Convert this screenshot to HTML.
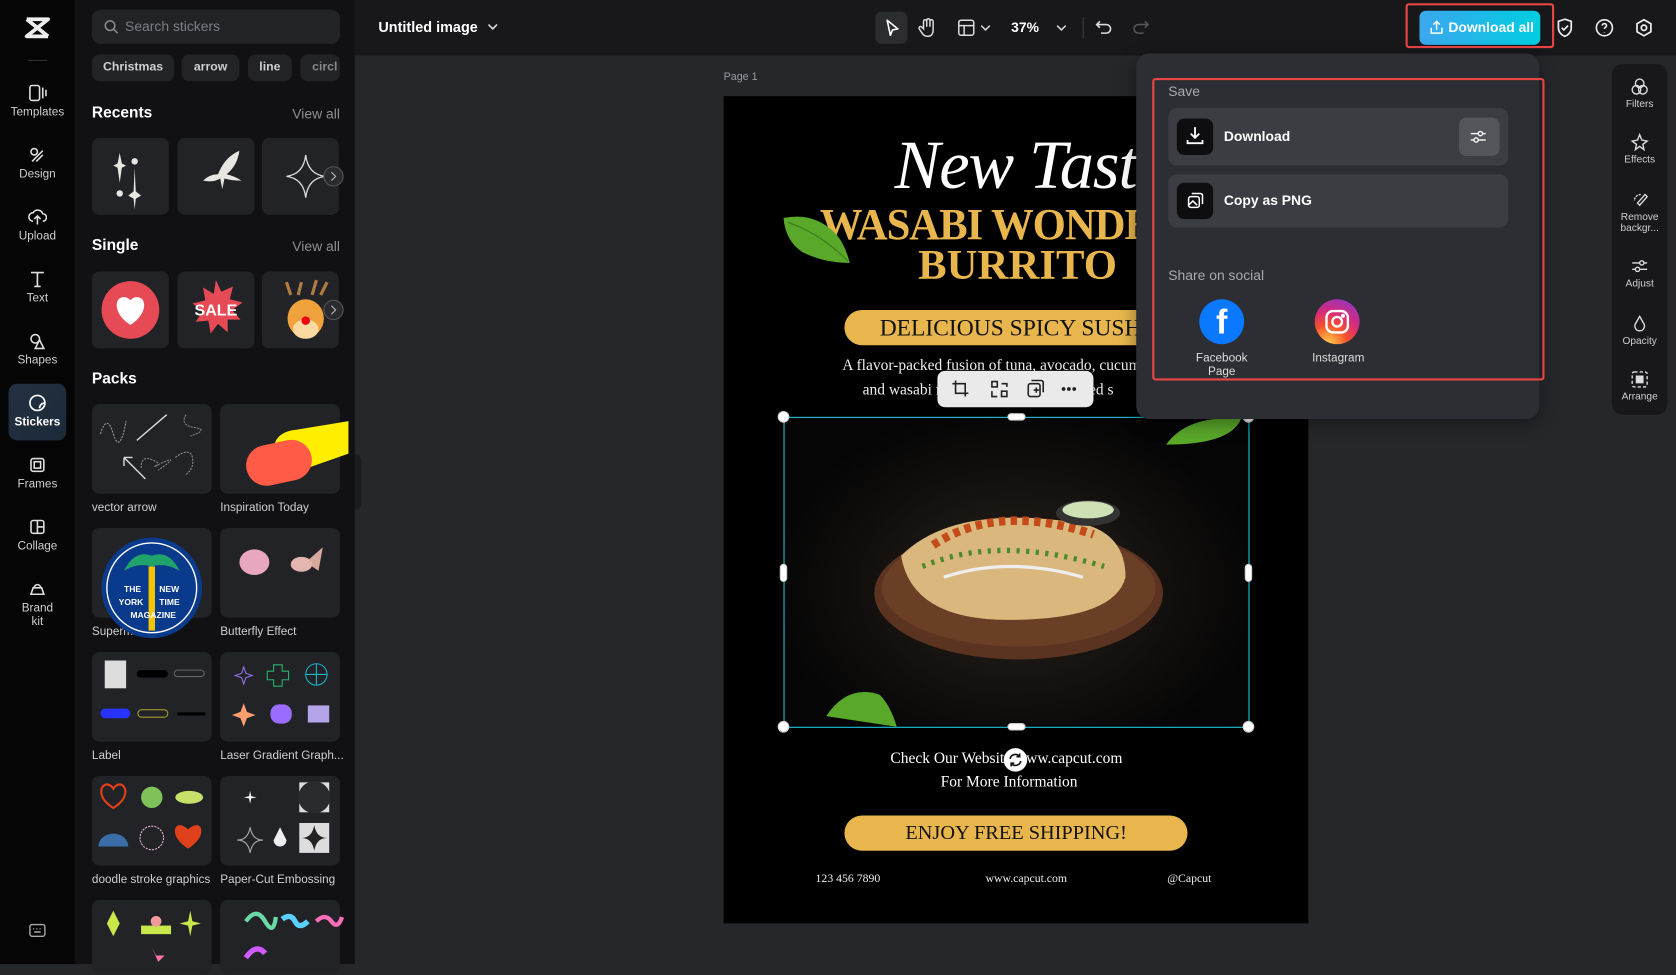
<!DOCTYPE html>
<html><head><meta charset="utf-8"><style>
*{box-sizing:border-box;margin:0;padding:0}
html,body{width:1676px;height:964px;overflow:hidden;background:#26272b;font-family:"Liberation Sans",sans-serif;color:#e6e6e6}
#w{position:absolute;left:0;top:0;width:1568px;height:902px;transform:scale(1.06888,1.0688);transform-origin:0 0;background:#26272b}
.a{position:absolute}
.rail{left:0;top:0;width:70px;height:902px;background:#050506}
.ri{position:absolute;left:0;width:70px;text-align:center;font-size:11px;color:#cfcfcf}
.ri svg{display:block;margin:0 auto 3px}
.panel{left:70px;top:0;width:262px;height:902px;background:#111114}
.chip{position:absolute;top:51px;height:25px;border-radius:7px;background:#222327;font-size:11.5px;color:#cfcfcf;font-weight:bold;line-height:25px;text-align:center}
.h{position:absolute;font-size:14.5px;font-weight:bold;color:#fff}
.va{position:absolute;right:14px;font-size:13px;color:#8d8e93}
.t{position:absolute;background:#222327;border-radius:7px}
.lb{position:absolute;font-size:11px;color:#cfcfcf}
.top{left:332px;top:0;width:1236px;height:52px;background:#18181b}
.poster{left:677px;top:90px;width:547px;height:774px;background:#000;overflow:hidden}
.serif{font-family:"Liberation Serif",serif}
.dd{left:1063px;top:50px;width:377px;height:342px;background:#2d2e33;border-radius:12px;box-shadow:0 4px 16px rgba(0,0,0,.4)}
.row{position:absolute;left:1093px;width:318px;background:#3c3d43;border-radius:8px}
.ib{position:absolute;left:8px;width:34px;height:34px;border-radius:7px;background:#0e0e10}
.rr{left:1508px;top:60px;width:52px;height:328px;background:#18181b;border-radius:10px}
.rt{position:absolute;left:0;width:52px;text-align:center;font-size:9.5px;color:#cfcfcf;line-height:10px}
.rt svg{display:block;margin:0 auto 3px}
</style></head><body><div id="w">

<div class="a rail">
  <svg class="a" style="left:22px;top:15px" width="26" height="22" viewBox="0 0 26 22"><path d="M3 3h20L3 19h20M3 3l20 16" stroke="#eee" stroke-width="3.5" fill="none" stroke-linejoin="round"/></svg>
  <div class="a" style="left:26px;top:56px;width:18px;height:1px;background:#333"></div>
  <div class="ri" style="top:78px"><svg width="18" height="18" viewBox="0 0 18 18" fill="none" stroke="#ddd" stroke-width="1.5"><rect x="2" y="2" width="9" height="14" rx="2"/><path d="M14 4v10M17 6v6"/></svg>Templates</div>
  <div class="ri" style="top:136px"><svg width="18" height="18" viewBox="0 0 18 18" fill="none" stroke="#ddd" stroke-width="1.5"><circle cx="6" cy="6" r="3"/><path d="M4 15l10-10M8 15l6-6"/></svg>Design</div>
  <div class="ri" style="top:194px"><svg width="18" height="18" viewBox="0 0 18 18" fill="none" stroke="#ddd" stroke-width="1.5"><path d="M5 13a4 4 0 010-8 5 5 0 019 1 3 3 0 010 7M9 16V9M6 11l3-3 3 3"/></svg>Upload</div>
  <div class="ri" style="top:252px"><svg width="18" height="18" viewBox="0 0 18 18" fill="none" stroke="#ddd" stroke-width="1.6"><path d="M3 3h12M9 3v13M6 16h6"/></svg>Text</div>
  <div class="ri" style="top:310px"><svg width="18" height="18" viewBox="0 0 18 18" fill="none" stroke="#ddd" stroke-width="1.5"><circle cx="7" cy="7" r="4"/><path d="M11 8l4 8H7z"/></svg>Shapes</div>
  <div class="a" style="left:8px;top:359px;width:54px;height:53px;border-radius:8px;background:linear-gradient(135deg,#243040,#1b2a3a)"></div>
  <div class="ri" style="top:368px;color:#fff;font-weight:bold"><svg width="18" height="18" viewBox="0 0 18 18" fill="none" stroke="#fff" stroke-width="1.6"><path d="M16 9a7 7 0 11-7-7h0a7 7 0 017 7zM16 9a5 5 0 00-5 5"/></svg>Stickers</div>
  <div class="ri" style="top:426px"><svg width="18" height="18" viewBox="0 0 18 18" fill="none" stroke="#ddd" stroke-width="1.5"><rect x="3" y="3" width="12" height="12" rx="2"/><rect x="6" y="6" width="6" height="6"/></svg>Frames</div>
  <div class="ri" style="top:484px"><svg width="18" height="18" viewBox="0 0 18 18" fill="none" stroke="#ddd" stroke-width="1.5"><rect x="3" y="3" width="12" height="12" rx="2"/><path d="M9 3v12M9 9h6"/></svg>Collage</div>
  <div class="ri" style="top:542px;line-height:13px"><svg width="18" height="18" viewBox="0 0 18 18" fill="none" stroke="#ddd" stroke-width="1.5"><path d="M3 14h12l-2-6H5zM6 8a3 3 0 016 0"/></svg>Brand<br>kit</div>
  <svg class="a" style="left:27px;top:864px" width="16" height="13" viewBox="0 0 16 13" fill="none" stroke="#aaa" stroke-width="1.3"><rect x="1" y="1" width="14" height="11" rx="2"/><path d="M4 5h1M7 5h1M10 5h1M5 8h6"/></svg>
</div>

<div class="a panel">
  <div class="a" style="left:16px;top:9px;width:232px;height:32px;border-radius:8px;background:#222327"></div>
  <svg class="a" style="left:27px;top:18px" width="14" height="14" viewBox="0 0 14 14" fill="none" stroke="#8b8c90" stroke-width="1.4"><circle cx="6" cy="6" r="4.5"/><path d="M9.5 9.5L13 13"/></svg>
  <div class="a" style="left:47px;top:17px;font-size:13px;color:#7d7e83">Search stickers</div>
  <div class="chip" style="left:16px;width:77px">Christmas</div>
  <div class="chip" style="left:100px;width:54px">arrow</div>
  <div class="chip" style="left:162px;width:41px">line</div>
  <div class="chip" style="left:211px;width:37px;text-align:left;padding-left:11px;color:#888;overflow:hidden">circl</div>
  <div class="h" style="left:16px;top:98px">Recents</div><div class="va" style="top:99px">View all</div>
  <div class="t" style="left:16px;top:129px;width:72px;height:72px"></div>
  <div class="t" style="left:96px;top:129px;width:72px;height:72px"></div>
  <div class="t" style="left:175px;top:129px;width:72px;height:72px"></div>
  <svg class="a" style="left:16px;top:129px" width="240" height="72" viewBox="0 0 240 72"><path d="M26 14l2 10 4 2-4 2-2 14-2-14-4-2 4-2z" fill="#e8e6e0"/><circle cx="26" cy="52" r="3" fill="#e8e6e0"/><circle cx="40" cy="22" r="3" fill="#e8e6e0"/><path d="M40 28l1 22 5 4-5 3-1 10-1-10-5-3 5-4z" fill="#e8e6e0"/><path d="M118 34q6-16 20-22-2 14-12 22 8 2 14 6-10 0-16-2l-2 10-2-10q-6 4-16 2 6-6 14-6" fill="#e8e6e0"/><path d="M200 16q2 18 18 20-16 2-18 20-2-18-18-20 16-2 18-20z" fill="none" stroke="#ddd" stroke-width="1.2"/><circle cx="226" cy="36" r="9" fill="#2a2b2f" stroke="#555"/><path d="M224 32l4 4-4 4" stroke="#bbb" fill="none"/></svg>
  <div class="h" style="left:16px;top:222px">Single</div><div class="va" style="top:223px">View all</div>
  <div class="t" style="left:16px;top:254px;width:72px;height:72px"></div>
  <div class="t" style="left:96px;top:254px;width:72px;height:72px"></div>
  <div class="t" style="left:175px;top:254px;width:72px;height:72px"></div>
  <svg class="a" style="left:16px;top:254px" width="240" height="72" viewBox="0 0 240 72"><circle cx="36" cy="36" r="27" fill="#e54a55"/><path d="M36 50C20 40 20 24 30 24c4 0 6 3 6 3s2-3 6-3c10 0 10 16-6 26z" fill="#fff"/><path d="M116 8l5 11 11-5-3 12 12 3-10 7 8 9-12 0 0 12-9-8-7 9-2-12-12 1 7-10-10-7 12-3-2-12 10 6z" fill="#e54a55"/><text x="116" y="41" font-size="15" font-weight="bold" fill="#fff" text-anchor="middle" font-family="Liberation Sans">SALE</text><path d="M182 10l4 12M196 10l-3 12M210 8l-4 14M220 10l-6 12" stroke="#b07a45" stroke-width="3"/><ellipse cx="200" cy="44" rx="17" ry="18" fill="#f0a23c"/><ellipse cx="200" cy="54" rx="12" ry="9" fill="#fcd9a0"/><circle cx="200" cy="46" r="4" fill="#e01"/><circle cx="226" cy="36" r="9" fill="#2a2b2f" stroke="#555"/><path d="M224 32l4 4-4 4" stroke="#bbb" fill="none"/></svg>
  <div class="h" style="left:16px;top:347px">Packs</div>
  <div class="t" style="left:16px;top:378px;width:112px;height:84px"></div>
  <div class="t" style="left:136px;top:378px;width:112px;height:84px"></div>
  <svg class="a" style="left:16px;top:378px" width="240" height="84" viewBox="0 0 240 84" fill="none"><path d="M8 28q6-20 12 0t12-12" stroke="#999" stroke-dasharray="2 1"/><path d="M70 10L42 34M30 50l20 20M30 50v8M30 50h8" stroke="#ddd" stroke-width="1.3"/><path d="M88 10q-6 10 8 12t-4 8" stroke="#888" stroke-dasharray="2 1"/><path d="M46 60q0-12 10-8t4 6 8-4-6 8" stroke="#888" stroke-dasharray="2 1"/><path d="M78 50q14-10 16 0t-6 16" stroke="#888" stroke-dasharray="2 1"/><path d="M170 44q0-18 22-20l60-10q16 0 12 24l-74 26z" fill="#ffee00"/><rect x="144" y="36" width="62" height="38" rx="19" transform="rotate(-12 175 55)" fill="#ff5b47"/></svg>
  <div class="lb" style="left:16px;top:469px">vector arrow</div><div class="lb" style="left:136px;top:469px">Inspiration Today</div>
  <div class="t" style="left:16px;top:494px;width:112px;height:84px"></div>
  <div class="t" style="left:136px;top:494px;width:112px;height:84px"></div>
  <div class="lb" style="left:16px;top:585px">Supermarket</div><div class="lb" style="left:136px;top:585px">Butterfly Effect</div>
  <svg class="a" style="left:16px;top:494px" width="240" height="110" viewBox="0 0 240 110"><circle cx="56" cy="56" r="47" fill="#0a3a8c"/><circle cx="56" cy="56" r="42" fill="none" stroke="#fff" stroke-width="1.3"/><path d="M30 40q10-20 26-14 16-6 26 14-14-8-26-4-12-4-26 4z" fill="#1fa36a"/><rect x="53" y="36" width="6" height="60" fill="#f5c400"/><g font-size="8" font-weight="bold" fill="#fff" font-family="Liberation Sans"><text x="30" y="60">THE</text><text x="63" y="60">NEW</text><text x="25" y="72">YORK</text><text x="63" y="72">TIME</text><text x="36" y="84">MAGAZINE</text></g><ellipse cx="152" cy="32" rx="14" ry="12" fill="#e9a6c0"/><path d="M200 32l16-14-4 22z" fill="#d9a89c"/><ellipse cx="196" cy="34" rx="10" ry="7" fill="#e5b5b0"/></svg>
  <div class="t" style="left:16px;top:610px;width:112px;height:84px"></div>
  <div class="t" style="left:136px;top:610px;width:112px;height:84px"></div>
  <svg class="a" style="left:16px;top:610px" width="240" height="84" viewBox="0 0 240 84" fill="none"><rect x="12" y="8" width="20" height="26" fill="#ddd"/><rect x="42" y="17" width="29" height="7" rx="3.5" fill="#000"/><rect x="77" y="17" width="28" height="6" rx="3" stroke="#666"/><rect x="8" y="53" width="28" height="9" rx="4.5" fill="#2933ff"/><rect x="43" y="54" width="28" height="7" rx="3.5" stroke="#a39a2a"/><path d="M80 58h26" stroke="#000" stroke-width="3"/><path d="M142 14l2 6 6 2-6 2-2 6-2-6-6-2 6-2z" stroke="#9a72e8"/><path d="M170 12h8v6h6v8h-6v6h-8v-6h-6v-8h6z" stroke="#2ab56a"/><circle cx="210" cy="21" r="10" stroke="#1bb7c8"/><path d="M200 21h20M210 11v20" stroke="#1bb7c8"/><path d="M142 48l3 8 8 3-8 3-3 8-3-8-8-3 8-3z" fill="#ff9d6c"/><rect x="167" y="49" width="20" height="18" rx="8" fill="#9a6cff"/><rect x="202" y="50" width="20" height="16" fill="#b4a5e8"/></svg>
  <div class="lb" style="left:16px;top:701px">Label</div><div class="lb" style="left:136px;top:701px">Laser Gradient Graph...</div>
  <div class="t" style="left:16px;top:726px;width:112px;height:84px"></div>
  <div class="t" style="left:136px;top:726px;width:112px;height:84px"></div>
  <svg class="a" style="left:16px;top:726px" width="240" height="84" viewBox="0 0 240 84" fill="none"><path d="M20 30C4 20 8 8 14 8c4 0 6 4 6 4s2-4 6-4c6 0 10 12-6 22z" stroke="#e0401a" stroke-width="2"/><circle cx="56" cy="20" r="10" fill="#7fc25a"/><ellipse cx="91" cy="20" rx="13" ry="6" fill="#c7e06a"/><path d="M6 66a14 12 0 0128 0z" fill="#3b6ea8"/><circle cx="56" cy="58" r="11" stroke="#e6b3d0" stroke-dasharray="2 1"/><path d="M90 68C74 58 76 46 82 46c4 0 8 4 8 4s4-4 8-4c6 0 8 12-8 22z" fill="#e0401a"/><path d="M148 14l1 5 5 1-5 1-1 5-1-5-5-1 5-1z" fill="#fff"/><rect x="194" y="6" width="28" height="28" fill="#ddd"/><circle cx="208" cy="20" r="15" fill="#2a2b2f"/><path d="M148 48q2 12 12 12-10 0-12 12-2-12-12-12 10 0 12-12z" stroke="#aaa"/><path d="M176 48l6 12a6 6 0 11-12 0z" fill="#eee"/><rect x="194" y="44" width="28" height="28" fill="#ddd"/><path d="M208 46q2 12 12 12-10 0-12 12-2-12-12-12 10 0 12-12z" fill="#222"/></svg>
  <div class="lb" style="left:16px;top:817px">doodle stroke graphics</div><div class="lb" style="left:136px;top:817px">Paper-Cut Embossing</div>
  <div class="t" style="left:16px;top:842px;width:112px;height:70px"></div>
  <div class="t" style="left:136px;top:842px;width:112px;height:70px"></div>
  <svg class="a" style="left:16px;top:842px" width="240" height="60" viewBox="0 0 240 60" fill="none"><path d="M20 10l6 12-6 12-6-12z" fill="#c8e84a"/><rect x="46" y="24" width="28" height="8" fill="#c8e84a"/><circle cx="60" cy="20" r="5" fill="#f19a9a"/><path d="M92 10l2 10 8 2-8 2-2 10-2-10-8-2 8-2z" fill="#c8e84a"/><path d="M56 44l4 8 8 0-6 6" fill="#f7a"/><path d="M144 20q10-14 18 0t10-4" stroke="#6bd9a6" stroke-width="4"/><path d="M178 18q8-6 12 2t12 0" stroke="#5ad0ff" stroke-width="5"/><path d="M210 20q8-8 14 0t10-4" stroke="#ff6fb8" stroke-width="4"/><path d="M144 54q10-14 18-4" stroke="#d05cff" stroke-width="5"/></svg>
</div>
<div class="a" style="left:332px;top:425px;width:6px;height:52px;background:#1b1c20;border-radius:0 6px 6px 0"></div>

<div class="a top">
  <div class="a" style="left:22px;top:18px;font-size:13.5px;font-weight:bold;color:#fff">Untitled image</div>
  <svg class="a" style="left:124px;top:21px" width="10" height="8" viewBox="0 0 10 8"><path d="M1 2l4 4 4-4" stroke="#ddd" stroke-width="1.5" fill="none"/></svg>
  <div class="a" style="left:487px;top:11px;width:30px;height:30px;border-radius:6px;background:#2c2d31"></div>
  <svg class="a" style="left:495px;top:17px" width="16" height="18" viewBox="0 0 16 18"><path d="M3 2l10 8-5 1-2 5z" stroke="#fff" stroke-width="1.5" fill="none" stroke-linejoin="round"/></svg>
  <svg class="a" style="left:527px;top:16px" width="18" height="20" viewBox="0 0 18 20" fill="none" stroke="#ddd" stroke-width="1.4"><path d="M5 11V4a1.5 1.5 0 013 0v5V3a1.5 1.5 0 013 0v6V4a1.5 1.5 0 013 0v8c0 4-2 6-5 6s-4-1-6-4l-2-3a1.5 1.5 0 012-2z"/></svg>
  <svg class="a" style="left:564px;top:18px" width="16" height="16" viewBox="0 0 16 16" fill="none" stroke="#ddd" stroke-width="1.4"><rect x="1" y="1" width="14" height="14" rx="2"/><path d="M1 6h14M6 6v9"/></svg>
  <svg class="a" style="left:585px;top:22px" width="10" height="8" viewBox="0 0 10 8"><path d="M1 2l4 4 4-4" stroke="#ddd" stroke-width="1.4" fill="none"/></svg>
  <div class="a" style="left:614px;top:18px;font-size:13px;font-weight:bold;color:#fff">37%</div>
  <svg class="a" style="left:656px;top:22px" width="10" height="8" viewBox="0 0 10 8"><path d="M1 2l4 4 4-4" stroke="#ddd" stroke-width="1.4" fill="none"/></svg>
  <div class="a" style="left:681px;top:16px;width:1px;height:20px;background:#3a3b40"></div>
  <svg class="a" style="left:693px;top:18px" width="16" height="16" viewBox="0 0 16 16" fill="none" stroke="#ddd" stroke-width="1.5"><path d="M4 2L1 5l3 3M1 5h9a4 4 0 010 8H5"/></svg>
  <svg class="a" style="left:727px;top:18px" width="16" height="16" viewBox="0 0 16 16" fill="none" stroke="#555" stroke-width="1.5"><path d="M12 2l3 3-3 3M15 5H6a4 4 0 000 8h5"/></svg>
  <div class="a" style="left:983px;top:3px;width:139px;height:42px;border:2.5px solid #e84545;border-radius:3px"></div>
  <div class="a" style="left:996px;top:10px;width:113px;height:32px;border-radius:6px;background:linear-gradient(90deg,#3ca7ee,#00cde0)"></div>
  <svg class="a" style="left:1005px;top:18px" width="14" height="15" viewBox="0 0 14 15" fill="none" stroke="#fff" stroke-width="1.4"><path d="M7 10V2M4 5l3-3 3 3M2 8v5h10V8"/></svg>
  <div class="a" style="left:1023px;top:18px;font-size:13px;font-weight:bold;color:#fff">Download all</div>
  <svg class="a" style="left:1123px;top:16px" width="18" height="20" viewBox="0 0 18 20" fill="none" stroke="#eee" stroke-width="1.6"><path d="M9 2l6 2v6c0 4-3 7-6 8-3-1-6-4-6-8V4z"/><path d="M6 10l2 2 4-4"/></svg>
  <svg class="a" style="left:1160px;top:17px" width="18" height="18" viewBox="0 0 18 18" fill="none" stroke="#eee" stroke-width="1.5"><circle cx="9" cy="9" r="7.5"/><path d="M7 7a2 2 0 114 0c0 1.5-2 1.5-2 3M9 13v.5"/></svg>
  <svg class="a" style="left:1197px;top:17px" width="18" height="18" viewBox="0 0 18 18" fill="none" stroke="#eee" stroke-width="1.6"><path d="M9 1.5l6.5 3.75v7.5L9 16.5 2.5 12.75v-7.5z"/><circle cx="9" cy="9" r="2.5"/></svg>
</div>

<div class="a" style="left:677px;top:67px;font-size:10px;color:#9a9ba0">Page 1</div>
<div class="a poster">
  <div class="a" style="left:160px;top:28px;font-family:'Liberation Serif',serif;font-style:italic;font-size:64px;color:#fff;white-space:nowrap;letter-spacing:-1px">New Taste</div>
  <div class="a serif" style="left:90px;top:96px;font-size:40px;font-weight:bold;color:#e8b64c;white-space:nowrap;letter-spacing:-1px;transform:scaleY(1.05)">WASABI WONDER</div>
  <div class="a serif" style="left:182px;top:134px;font-size:40px;font-weight:bold;color:#e8b64c;white-space:nowrap">BURRITO</div>
  <svg class="a" style="left:54px;top:108px" width="66" height="50" viewBox="0 0 66 50"><path d="M2 6q30-6 50 16 8 10 12 26Q40 48 20 38 4 28 2 6z" fill="#5aa82a"/><path d="M6 10q30 10 56 36" stroke="#3e7a1a" fill="none"/></svg>
  <div class="a" style="left:113px;top:200px;width:360px;height:33px;border-radius:17px;background:#e8b64c"></div>
  <div class="a serif" style="left:146px;top:204px;font-size:22px;color:#111;white-space:nowrap">DELICIOUS SPICY SUSHI</div>
  <div class="a serif" style="left:111px;top:244px;font-size:14.5px;color:#eee;white-space:nowrap">A flavor-packed fusion of tuna, avocado, cucumber,</div>
  <div class="a serif" style="left:130px;top:267px;font-size:14.5px;color:#eee;white-space:nowrap">and wasabi mayo, wrapped in seaweed s</div>
  <div class="a" style="left:56px;top:300px;width:436px;height:290px;background:radial-gradient(ellipse at 50% 55%,#2b231c 0%,#151210 40%,#050505 75%)"></div>
  <svg class="a" style="left:56px;top:300px" width="436" height="290" viewBox="0 0 436 290"><ellipse cx="220" cy="165" rx="135" ry="62" fill="#5a3420"/><ellipse cx="220" cy="160" rx="128" ry="55" fill="#6b3f25"/><path d="M110 130q50-50 170-30 40 10 40 50-10 40-110 40-90 0-100-60z" fill="#d9b77d"/><path d="M140 120q60-40 150-10" stroke="#c44a1a" stroke-width="8" fill="none" stroke-dasharray="6 5"/><path d="M130 140q70-30 170 0" stroke="#4d8a2b" stroke-width="5" fill="none" stroke-dasharray="3 6"/><path d="M150 150q60-20 130 0" stroke="#eee" stroke-width="3" fill="none"/><ellipse cx="285" cy="90" rx="30" ry="12" fill="#333"/><ellipse cx="285" cy="87" rx="24" ry="8" fill="#cfe0b5"/><path d="M40 280q20-30 50-20 10 10 16 30" fill="#5aa82a"/></svg>
  <svg class="a" style="left:410px;top:300px" width="80" height="30" viewBox="0 0 80 30"><path d="M4 26q20-28 70-24-10 24-70 24z" fill="#5aa82a"/></svg>
  <div class="a serif" style="left:156px;top:612px;font-size:14.5px;color:#fff;white-space:nowrap">Check Our Website www.capcut.com</div>
  <div class="a serif" style="left:203px;top:634px;font-size:14.5px;color:#fff;white-space:nowrap">For More Information</div>
  <div class="a" style="left:113px;top:673px;width:321px;height:33px;border-radius:17px;background:#e8b64c"></div>
  <div class="a serif" style="left:170px;top:679px;font-size:19px;color:#111;white-space:nowrap">ENJOY FREE SHIPPING!</div>
  <div class="a serif" style="left:86px;top:726px;font-size:11px;color:#eee">123 456 7890</div>
  <div class="a serif" style="left:245px;top:726px;font-size:11px;color:#eee">www.capcut.com</div>
  <div class="a serif" style="left:415px;top:726px;font-size:11px;color:#eee">@Capcut</div>
</div>
<div class="a" style="left:733px;top:390px;width:436px;height:291px;border:1.5px solid #1ec8e0"></div>
<svg class="a" style="left:726px;top:383px" width="450" height="305" viewBox="0 0 450 305"><g fill="#fff" stroke="#ccc"><circle cx="7" cy="7" r="5"/><circle cx="442" cy="7" r="5"/><circle cx="7" cy="297" r="5"/><circle cx="442" cy="297" r="5"/><rect x="217" y="4" width="16" height="6" rx="3"/><rect x="217" y="294" width="16" height="6" rx="3"/><rect x="4" y="145" width="6" height="16" rx="3"/><rect x="439" y="145" width="6" height="16" rx="3"/></g></svg>
<div class="a" style="left:939px;top:700px;width:22px;height:22px;border-radius:11px;background:#fff"></div>
<svg class="a" style="left:943px;top:704px" width="14" height="14" viewBox="0 0 14 14" fill="none" stroke="#111" stroke-width="1.5"><path d="M2 6a5 5 0 019-2M12 8a5 5 0 01-9 2M11 1v3H8M3 13v-3h3"/></svg>
<div class="a" style="left:877px;top:347px;width:146px;height:34px;border-radius:7px;background:#eaeaea;box-shadow:0 2px 6px rgba(0,0,0,.4)"></div>
<svg class="a" style="left:890px;top:355px" width="125" height="18" viewBox="0 0 125 18" fill="none" stroke="#222" stroke-width="1.5"><path d="M4 1v12h12M1 4h12v12"/><rect x="38" y="2" width="5" height="5"/><rect x="47" y="11" width="5" height="5"/><path d="M47 4h5v3M38 11v5h5"/><rect x="72" y="4" width="11" height="12" rx="2"/><path d="M75 1h9a2 2 0 012 2v9M77 10h5M79.5 7.5v5"/><circle cx="105" cy="9" r="1" fill="#222"/><circle cx="110" cy="9" r="1" fill="#222"/><circle cx="115" cy="9" r="1" fill="#222"/></svg>

<div class="a dd"></div>
<div class="a" style="left:1078px;top:73px;width:367px;height:283px;border:2.5px solid #e84545;border-radius:3px"></div>
<div class="a" style="left:1093px;top:78px;font-size:13px;color:#a9aaae">Save</div>
<div class="row" style="top:101px;height:54px"><div class="ib" style="top:10px"></div><div class="a" style="left:52px;top:19px;font-size:13px;font-weight:bold;color:#fff">Download</div><div class="a" style="left:272px;top:9px;width:38px;height:36px;border-radius:7px;background:#54555b"></div></div>
<svg class="a" style="left:1108px;top:117px" width="20" height="20" viewBox="0 0 20 20" fill="none" stroke="#fff" stroke-width="1.7"><path d="M10 2v10M6 8l4 4 4-4M3 14v3h14v-3"/></svg>
<svg class="a" style="left:1374px;top:119px" width="18" height="18" viewBox="0 0 18 18" fill="none" stroke="#eee" stroke-width="1.4"><path d="M2 6h14M2 12h14"/><circle cx="11" cy="6" r="2" fill="#54555b"/><circle cx="7" cy="12" r="2" fill="#54555b"/></svg>
<div class="row" style="top:163px;height:50px"><div class="ib" style="top:8px"></div><div class="a" style="left:52px;top:17px;font-size:13px;font-weight:bold;color:#fff">Copy as PNG</div></div>
<svg class="a" style="left:1109px;top:179px" width="18" height="18" viewBox="0 0 18 18" fill="none" stroke="#fff" stroke-width="1.4"><rect x="3" y="5" width="10" height="10" rx="2"/><path d="M6 2h8a2 2 0 012 2v8"/><path d="M3 13l4-4 4 4"/></svg>
<div class="a" style="left:1093px;top:250px;font-size:13px;color:#a9aaae">Share on social</div>
<div class="a" style="left:1122px;top:280px;width:42px;height:42px;border-radius:21px;background:#0a78ff"></div>
<div class="a" style="left:1122px;top:278px;width:42px;font-size:32px;font-weight:bold;color:#fff;text-align:center;line-height:46px;font-family:'Liberation Sans',sans-serif">f</div>
<div class="a" style="left:1105px;top:329px;width:76px;text-align:center;font-size:11px;color:#ddd;line-height:13px">Facebook<br>Page</div>
<div class="a" style="left:1230px;top:280px;width:42px;height:42px;border-radius:21px;background:radial-gradient(circle at 30% 100%,#ffd24a 0%,#f5512d 35%,#d62b7a 60%,#7a3bd8 100%)"></div>
<svg class="a" style="left:1239px;top:289px" width="24" height="24" viewBox="0 0 24 24" fill="none" stroke="#fff" stroke-width="2.2"><rect x="2" y="2" width="20" height="20" rx="6"/><circle cx="12" cy="12" r="4.5"/><circle cx="17.5" cy="6.5" r=".8" fill="#fff"/></svg>
<div class="a" style="left:1214px;top:329px;width:76px;text-align:center;font-size:11px;color:#ddd">Instagram</div>

<div class="a rr">
  <div class="rt" style="top:12px"><svg width="18" height="18" viewBox="0 0 18 18" fill="none" stroke="#ddd" stroke-width="1.3"><circle cx="9" cy="6" r="4"/><circle cx="6" cy="12" r="4"/><circle cx="12" cy="12" r="4"/></svg>Filters</div>
  <div class="rt" style="top:64px"><svg width="18" height="18" viewBox="0 0 18 18" fill="none" stroke="#ddd" stroke-width="1.3"><path d="M9 2l2 5 5 1-4 3 1 5-4-3-4 3 1-5-4-3 5-1z"/></svg>Effects</div>
  <div class="rt" style="top:118px"><svg width="18" height="18" viewBox="0 0 18 18" fill="none" stroke="#ddd" stroke-width="1.3"><path d="M10 4a6 6 0 00-6 6" stroke-dasharray="2 1"/><path d="M14 4l-7 8 2 2 7-8z"/></svg>Remove<br>backgr...</div>
  <div class="rt" style="top:180px"><svg width="18" height="18" viewBox="0 0 18 18" fill="none" stroke="#ddd" stroke-width="1.3"><path d="M2 6h14M2 12h14"/><circle cx="11" cy="6" r="2" fill="#18181b"/><circle cx="7" cy="12" r="2" fill="#18181b"/></svg>Adjust</div>
  <div class="rt" style="top:234px"><svg width="18" height="18" viewBox="0 0 18 18" fill="none" stroke="#ddd" stroke-width="1.3"><path d="M9 2l4 7a4.5 4.5 0 11-8 0z"/></svg>Opacity</div>
  <div class="rt" style="top:286px"><svg width="18" height="18" viewBox="0 0 18 18" fill="none" stroke="#ddd" stroke-width="1.3"><rect x="2" y="2" width="14" height="14" rx="2" stroke-dasharray="3 2"/><rect x="6" y="6" width="6" height="6" fill="#ddd"/></svg>Arrange</div>
</div>
</div></body></html>
